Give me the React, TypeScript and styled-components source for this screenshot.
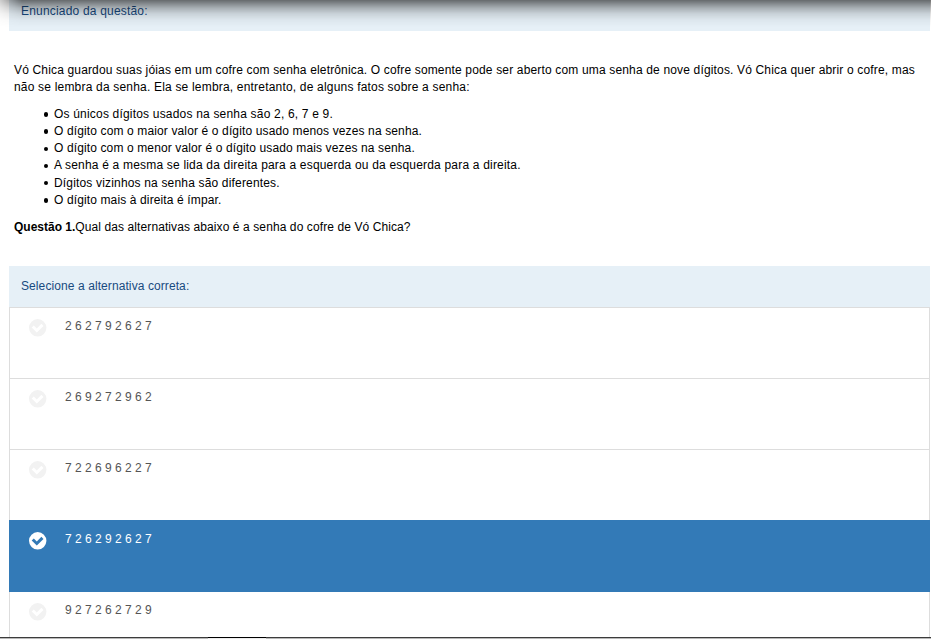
import React from 'react';
import styled, { createGlobalStyle } from 'styled-components';

const GlobalStyle = createGlobalStyle`
  * { box-sizing: border-box; }
  html, body { margin: 0; height: 100%; overflow: hidden; background: #fff; }
  body { font: 12px/17.14px "Liberation Sans", Arial, sans-serif; color: #000; }
`;

const Page = styled.main`
  position: relative;
  width: 931px;
  height: 639px;
  overflow: hidden;
  padding: 0 1px 0 9px;
`;

const TopShadow = styled.div`
  position: absolute;
  inset: 0 0 auto 0;
  height: 27px;
  background: linear-gradient(to bottom, rgba(0, 0, 0, 0.56) 0, rgba(0, 0, 0, 0.45) 3px, rgba(0, 0, 0, 0.27) 8px, rgba(0, 0, 0, 0.12) 14px, rgba(0, 0, 0, 0.04) 20px, rgba(0, 0, 0, 0) 27px);
  mask-image: linear-gradient(to right, rgba(0, 0, 0, 0.35) 0, #000 22px);
`;

const Heading = styled.h2<{ $height: number; $top: number; $spacing: number }>`
  margin: 0;
  height: ${(p) => p.$height}px;
  padding: ${(p) => p.$top}px 12px 0;
  background: #e6f0f7;
  color: #184a80;
  font-size: 12px;
  font-weight: 400;
  letter-spacing: ${(p) => p.$spacing}px;
`;

const Statement = styled.section`
  height: 235px;
  padding: 31px 0 0 5px;
`;

const Paragraph = styled.p`
  margin: 0 0 9.72px;
`;

const Line = styled.span<{ $spacing?: number }>`
  display: block;
  white-space: nowrap;
  letter-spacing: ${(p) => p.$spacing ?? 0}px;
  b { letter-spacing: 0; }
`;

const Facts = styled.ul`
  margin: 0 0 10.28px;
  padding: 0;
  list-style: none;
`;

const Fact = styled.li`
  display: flex;
  padding-left: 29.5px;

  &::before {
    content: '';
    flex: none;
    width: 4.5px;
    height: 4.5px;
    margin: 6.3px 6px 0 0;
    border-radius: 50%;
    background: #000;
  }
`;

const Options = styled.ul`
  margin: 0;
  padding: 0;
  list-style: none;
`;

const Option = styled.li<{ $selected: boolean }>`
  position: relative;
  display: flex;
  align-items: flex-start;
  gap: 18px;
  height: 72px;
  margin-bottom: -1px;
  padding: 10px 19px;
  border: 1px solid ${(p) => (p.$selected ? '#337ab7' : '#dddddd')};
  background: ${(p) => (p.$selected ? '#337ab7' : '#fff')};
  color: ${(p) => (p.$selected ? '#fff' : '#555')};
  z-index: ${(p) => (p.$selected ? 1 : 0)};
`;

const CheckIcon = styled.svg`
  width: 18px;
  height: 18px;
  margin-top: 1px;
  flex: none;
`;

const BottomEdge = styled.div`
  position: absolute;
  inset: auto 0 0 0;
  z-index: 2;
  height: 2px;
  border-top: 1px solid #3c3c3c;
  background: #b9b9b9;
`;

const EdgeTab = styled.div`
  width: 58px;
  height: 2px;
  margin: -1px 0 0 208px;
  border-top: 1px solid #000;
  background: #ededed;
`;

const facts = [
  { text: 'Os únicos dígitos usados na senha são 2, 6, 7 e 9.', spacing: 0.19 },
  { text: 'O dígito com o maior valor é o dígito usado menos vezes na senha.', spacing: 0.13 },
  { text: 'O dígito com o menor valor é o dígito usado mais vezes na senha.', spacing: 0.125 },
  { text: 'A senha é a mesma se lida da direita para a esquerda ou da esquerda para a direita.', spacing: 0.19 },
  { text: 'Dígitos vizinhos na senha são diferentes.', spacing: 0.17 },
  { text: 'O dígito mais à direita é ímpar.', spacing: 0.125 },
];

const options = [
  '2 6 2 7 9 2 6 2 7',
  '2 6 9 2 7 2 9 6 2',
  '7 2 2 6 9 6 2 2 7',
  '7 2 6 2 9 2 6 2 7',
  '9 2 7 2 6 2 7 2 9',
];

function Check({ selected }: { selected: boolean }) {
  return (
    <CheckIcon viewBox="0 0 18 18" aria-hidden="true">
      <circle cx="8.7" cy="8.8" r="8.7" fill={selected ? '#fff' : '#f2f2f2'} />
      <path d="M2.7 8.5 4.8 6.4 7.8 9.4 12.4 4.8 14.5 6.9 7.8 13.6Z" fill={selected ? '#337ab7' : '#fff'} />
    </CheckIcon>
  );
}

export default function App() {
  const selected = 3;
  return (
    <>
      <GlobalStyle />
      <Page>
        <Heading $height={31} $top={3} $spacing={0.19}>Enunciado da questão:</Heading>
        <Statement>
          <Paragraph>
            <Line $spacing={0.16}>Vó Chica guardou suas jóias em um cofre com senha eletrônica. O cofre somente pode ser aberto com uma senha de nove dígitos. Vó Chica quer abrir o cofre, mas</Line>
            <Line $spacing={0.19}>não se lembra da senha. Ela se lembra, entretanto, de alguns fatos sobre a senha:</Line>
          </Paragraph>
          <Facts>
            {facts.map((f) => (
              <Fact key={f.text}><Line $spacing={f.spacing}>{f.text}</Line></Fact>
            ))}
          </Facts>
          <Paragraph>
            <Line $spacing={0.095}><b>Questão 1.</b>Qual das alternativas abaixo é a senha do cofre de Vó Chica?</Line>
          </Paragraph>
        </Statement>
        <Heading $height={41} $top={12} $spacing={0.09}>Selecione a alternativa correta:</Heading>
        <Options>
          {options.map((digits, i) => (
            <Option key={digits} $selected={i === selected}>
              <Check selected={i === selected} />
              <span>{digits}</span>
            </Option>
          ))}
        </Options>
        <TopShadow />
        <BottomEdge><EdgeTab /></BottomEdge>
      </Page>
    </>
  );
}
